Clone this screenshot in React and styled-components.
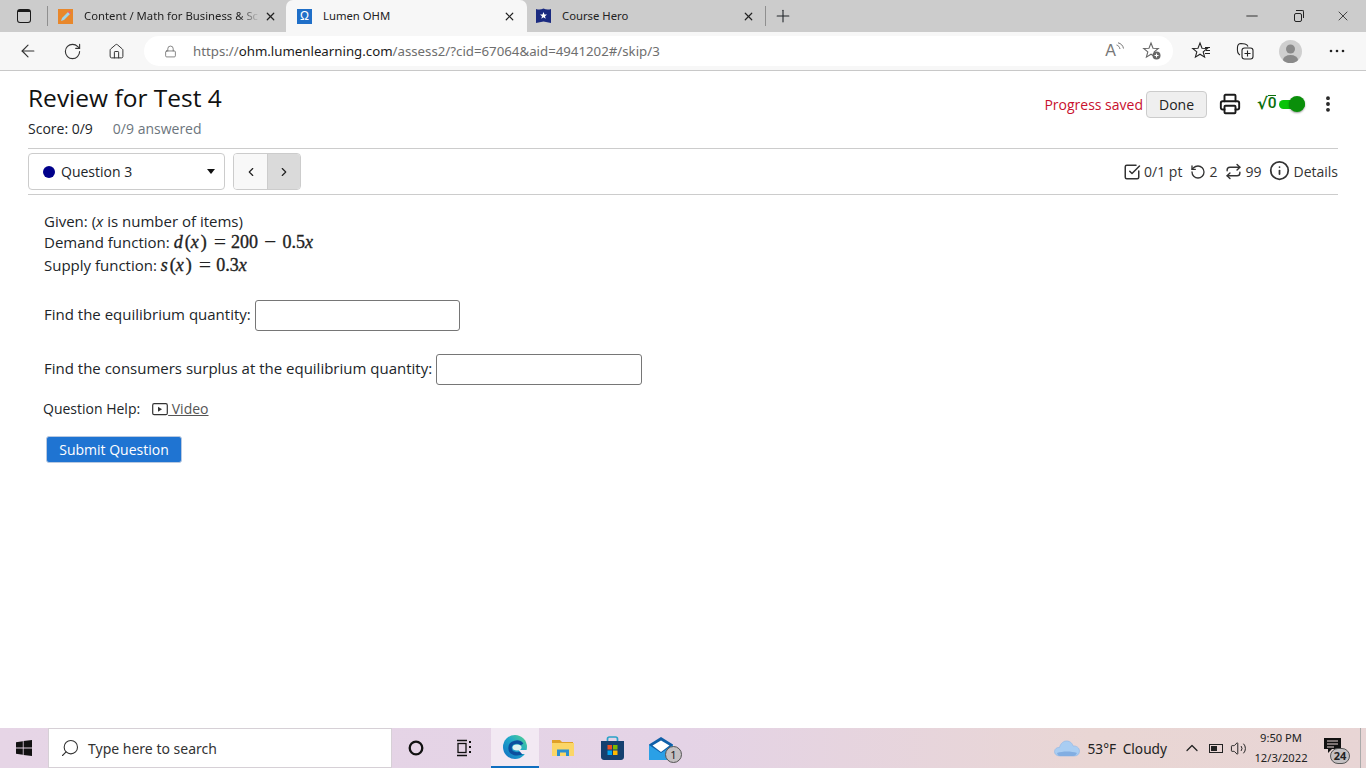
import React from 'react';
import styled, { createGlobalStyle } from 'styled-components';
import { X, Plus, Minus, ArrowLeft, RotateCw, Home, Lock, Printer, SquareCheckBig, RotateCcw, Repeat, Info, ChevronLeft, ChevronRight, MoreVertical, Search, ChevronUp, Volume2 } from 'lucide-react';

const Global = createGlobalStyle`
  html, body { margin: 0; padding: 0; height: 100%; overflow: hidden; background: #fff; }
  #root { height: 100%; }
  * { box-sizing: border-box; }
`;

const Screen = styled.div`
  width: 1366px;
  height: 768px;
  display: flex;
  flex-direction: column;
  font-family: "Open Sans", "Liberation Sans", sans-serif;
  color: #212529;
`;

const TabStrip = styled.div`
  height: 32px;
  background: #cccccc;
  display: flex;
  align-items: center;
  flex: none;
`;
const TabsToggle = styled.div`
  width: 48px;
  height: 32px;
  display: flex;
  align-items: center;
  padding-left: 17px;
  position: relative;
  &::after {
    content: '';
    position: absolute;
    left: 47px;
    top: 6px;
    height: 20px;
    width: 1px;
    background: #8f8f8f;
  }
`;
const TabsIcon = styled.div`
  width: 14px;
  height: 14px;
  border: 1.5px solid #1a1a1a;
  border-radius: 3px;
  border-top-width: 3px;
`;
const Tab = styled.div`
  width: ${p => p.$w}px;
  height: 32px;
  display: flex;
  align-items: center;
  padding-left: ${p => p.$pad}px;
  padding-right: ${p => p.$pr || 10}px;
  font-size: 12px;
  color: #222;
  background: ${p => (p.$active ? '#f7f7f7' : 'transparent')};
  border-radius: ${p => (p.$active ? '7px 7px 0 0' : '0')};
`;
const Favicon = styled.div`
  width: 15px;
  height: 15px;
  flex: none;
  margin-right: 11px;
  display: flex;
  align-items: center;
  justify-content: center;
  background: ${p => p.$bg || 'transparent'};
  color: #fff;
  font-size: 12px;
  font-family: "Liberation Sans", sans-serif;
`;
const TabTitle = styled.div`
  flex: 1;
  min-width: 0;
  padding-bottom: 2px;
  margin-right: 4px;
  white-space: nowrap;
  overflow: hidden;
  font-family: "Noto Sans", sans-serif;
  font-size: 11.3px;
  ${p => p.$fade && 'mask-image: linear-gradient(90deg, #000 88%, transparent 100%);'}
`;
const TabClose = styled(X)`
  flex: none;
  stroke-width: 2.2;
`;
const TabDivider = styled.div`
  width: 1px;
  height: 20px;
  background: #8f8f8f;
`;
const NewTab = styled.div`
  width: 34px;
  display: flex;
  justify-content: center;
`;
const WindowButtons = styled.div`
  margin-left: auto;
  display: flex;
  align-items: center;
  gap: 33px;
  padding-right: 15px;
  color: #111;
`;
const RestoreIcon = styled.div`
  width: 8px;
  height: 9px;
  margin-top: 2px;
  border: 1px solid #222;
  border-radius: 2px;
  position: relative;
  &::after {
    content: '';
    position: absolute;
    top: -4px;
    right: -3px;
    width: 7px;
    height: 7px;
    border-top: 1px solid #222;
    border-right: 1px solid #222;
    border-radius: 0 2px 0 0;
  }
`;

const Toolbar = styled.div`
  height: 39px;
  flex: none;
  background: #f7f7f7;
  border-bottom: 1px solid #c8c8c8;
  display: flex;
  align-items: center;
  padding-left: 18px;
  color: #333;
`;
const NavButton = styled.div`
  width: 20px;
  margin-right: ${p => p.$mr || 0}px;
  display: flex;
  align-items: center;
  justify-content: center;
`;
const Address = styled.div`
  width: 1029px;
  height: 30px;
  background: #fff;
  border-radius: 15px;
  display: flex;
  align-items: center;
  padding-left: 20px;
  font-family: "Noto Sans", sans-serif;
  font-size: 13.25px;
  color: #6e6e6e;
`;
const LockIcon = styled(Lock)`
  margin-right: 16px;
  flex: none;
`;
const UrlHost = styled.span`
  color: #1a1a1a;
`;
const AddressEnd = styled.div`
  margin-left: auto;
  display: flex;
  align-items: center;
  gap: 18px;
  padding-right: 11px;
`;
const ReadAloud = styled.span`
  display: flex;
  align-items: flex-start;
  font-size: 16px;
  line-height: 18px;
  color: #777;
  font-family: "Liberation Sans", sans-serif;
`;
const ToolRight = styled.div`
  display: flex;
  align-items: center;
  margin-left: 18px;
  gap: 24px;
`;
const Avatar = styled.div`
  width: 23px;
  height: 23px;
  border-radius: 50%;
  background: #cfcfcf;
  overflow: hidden;
`;
const MoreDots = styled.svg`
  margin-left: 3px;
`;

const Main = styled.div`
  flex: 1;
  min-height: 0;
  padding: 0 28px;
  background: #fff;
`;
const HeadRow = styled.div`
  display: flex;
  justify-content: space-between;
  height: 78px;
  border-bottom: 1px solid #ccc;
`;
const Title = styled.h1`
  margin: 9px 0 0;
  font-size: 24.5px;
  line-height: 35px;
  font-weight: 400;
  color: #111;
`;
const ScoreRow = styled.div`
  margin-top: 4px;
  font-size: 14px;
  line-height: 20px;
  display: flex;
  gap: 20px;
`;
const Answered = styled.span`
  color: #6c757d;
`;
const HeadTools = styled.div`
  display: flex;
  align-items: center;
  height: 28px;
  margin-top: 19px;
`;
const Saved = styled.span`
  color: #c8102e;
  font-size: 14px;
  margin-right: 3px;
`;
const DoneButton = styled.button`
  width: 61px;
  height: 27px;
  background: #efefef;
  border: 1px solid #ccc;
  border-radius: 4px;
  font: 14px "Open Sans", sans-serif;
  color: #222;
  padding: 0;
  margin-right: 12px;
`;
const MathToggle = styled.div`
  display: flex;
  align-items: center;
  margin-left: 16px;
  margin-right: 13px;
  color: #0a6e0a;
`;
const RootGlyph = styled.div`
  width: 22px;
  display: flex;
  align-items: flex-start;
`;
const RootSign = styled.span`
  font-family: "DejaVu Sans", sans-serif;
  font-weight: 700;
  font-size: 16px;
  line-height: 18px;
`;
const Radicand = styled.span`
  font-family: "Roboto", sans-serif;
  font-weight: 500;
  font-size: 15.5px;
  line-height: 15px;
  border-top: 1.5px solid #0a6e0a;
`;
const Track = styled.div`
  width: 26px;
  height: 9px;
  background: #0ac40a;
  border-radius: 5px;
  position: relative;
`;
const Knob = styled.div`
  position: absolute;
  right: 0;
  top: -4px;
  width: 16px;
  height: 16px;
  border-radius: 50%;
  background: #0a8f0a;
  box-shadow: 0 1px 2px rgba(0, 0, 0, 0.4);
`;

const NavRow = styled.div`
  display: flex;
  align-items: center;
  justify-content: space-between;
  height: 46px;
  border-bottom: 1px solid #ccc;
`;
const NavLeft = styled.div`
  display: flex;
  gap: 8px;
`;
const QuestionSelect = styled.div`
  width: 197px;
  height: 37px;
  border: 1px solid #ccc;
  border-radius: 4px;
  display: flex;
  align-items: center;
  padding: 0 9px 0 14px;
  font-size: 14px;
`;
const Dot = styled.span`
  width: 12px;
  height: 12px;
  border-radius: 50%;
  background: #00008b;
  margin-right: 6px;
`;
const Caret = styled.span`
  margin-left: auto;
  width: 0;
  height: 0;
  border-left: 4px solid transparent;
  border-right: 4px solid transparent;
  border-top: 5px solid #111;
`;
const Pager = styled.div`
  display: flex;
  height: 37px;
  border: 1px solid #ccc;
  border-radius: 4px;
  overflow: hidden;
`;
const PageButton = styled.div`
  width: 33px;
  display: flex;
  align-items: center;
  justify-content: center;
  background: ${p => (p.$on ? '#dadada' : '#f8f8f8')};
  border-left: ${p => (p.$on ? '1px solid #ccc' : 'none')};
  color: #222;
`;
const Meta = styled.div`
  display: flex;
  align-items: center;
  font-size: 14px;
  color: #333;
`;
const MetaItem = styled.span`
  display: flex;
  align-items: center;
  gap: 3px;
  margin-left: ${p => p.$ml || 0}px;
`;
const InfoIcon = styled(Info)`
  margin-top: -3px;
`;

const Question = styled.div`
  padding: 16px 0 0 16px;
  font-size: 15px;
  color: #212529;
`;
const Line = styled.div`
  line-height: ${p => p.$lh}px;
  height: ${p => p.$lh}px;
  white-space: pre;
`;
const MathText = styled.span`
  font-family: "Liberation Serif", serif;
  font-size: 18px;
  color: #222;
  -webkit-text-stroke: 0.35px #222;
  i { font-style: italic; margin-right: 2px; }
`;
const MathOp = styled.span`
  font-size: 22px;
  line-height: 0;
  vertical-align: -1px;
  margin: 0 ${p => p.$mr}px 0 ${p => p.$ml}px;
  -webkit-text-stroke: 0;
`;
const AnswerRow = styled.div`
  display: flex;
  align-items: flex-start;
  gap: 4px;
  height: 30px;
  line-height: 28px;
  margin-top: ${p => p.$mt}px;
`;
const AnswerBox = styled.input`
  width: ${p => p.$w}px;
  height: 31px;
  border: 1px solid #767676;
  border-radius: 3px;
  background: #fff;
  outline: none;
`;
const HelpRow = styled.div`
  display: flex;
  align-items: center;
  margin: 15px 0 0 -1px;
  font-size: 14px;
  line-height: 20px;
`;
const VideoLink = styled.a`
  display: flex;
  align-items: center;
  margin-left: 12px;
  color: #555;
  text-decoration: underline;
`;
const SubmitButton = styled.button`
  display: block;
  width: 136px;
  height: 27px;
  margin: 17px 0 0 2px;
  padding: 0;
  background: #1f74d2;
  border: 1px solid #b9c9e0;
  border-radius: 3px;
  color: #fff;
  font: 14px "Open Sans", sans-serif;
`;

const Taskbar = styled.div`
  height: 40px;
  flex: none;
  background: linear-gradient(90deg, #e6d5e6 0%, #e4d3e6 50%, #e9d6d4 80%, #e8d5d5 100%);
  display: flex;
  align-items: center;
  font-family: "Noto Sans", sans-serif;
  color: #222;
`;
const StartCell = styled.div`
  width: 48px;
  display: flex;
  justify-content: center;
`;
const SearchBox = styled.div`
  width: 344px;
  height: 40px;
  background: #fff;
  border: 1px solid #d6d0d6;
  display: flex;
  align-items: center;
  padding-left: 11px;
  gap: 8px;
  font-size: 14px;
  color: #333;
`;
const SearchIcon = styled(Search)`
  transform: scaleX(-1);
`;
const TaskIcon = styled.div`
  width: 48px;
  height: 40px;
  margin-left: ${p => p.$ml || 0}px;
  display: flex;
  align-items: center;
  justify-content: center;
  position: relative;
  background: ${p => (p.$active ? '#f2e9f3' : 'transparent')};
  border-bottom: ${p => (p.$active ? '2px solid #0f6fc0' : 'none')};
`;
const Badge = styled.span`
  position: absolute;
  right: ${p => p.$r}px;
  bottom: ${p => p.$b}px;
  min-width: ${p => p.$w}px;
  height: ${p => p.$h}px;
  border-radius: 9px;
  background: #c4c0c2;
  border: 1px solid #555;
  color: #222;
  font-size: 11px;
  font-weight: ${p => (p.$bold ? 700 : 400)};
  line-height: ${p => p.$h - 2}px;
  text-align: center;
`;
const Tray = styled.div`
  margin-left: auto;
  display: flex;
  align-items: center;
  height: 40px;
  padding-right: 5px;
`;
const Weather = styled.span`
  font-size: 13.7px;
  margin-left: 7px;
  margin-right: 15px;
  word-spacing: 3px;
`;
const TrayIcons = styled.div`
  display: flex;
  align-items: center;
  gap: 7px;
`;
const BatteryIcon = styled.div`
  width: 14px;
  height: 9px;
  border: 1.5px solid #222;
  padding: 1px;
  &::before {
    content: '';
    display: block;
    width: 6px;
    height: 100%;
    background: #222;
  }
`;
const Clock = styled.div`
  width: 70px;
  margin-left: -1px;
  text-align: center;
  font-size: 11.2px;
  line-height: 20px;
`;
const Notice = styled.div`
  width: 32px;
  position: relative;
  height: 40px;
  display: flex;
  align-items: center;
  justify-content: center;
`;
const NoticeIcon = styled.svg`
  margin-top: -6px;
`;
const ShowDesktop = styled.div`
  width: 1px;
  height: 40px;
  background: #aaa;
  margin-left: 12px;
`;

const WindowsLogo = () => (
  <svg width="16" height="16" viewBox="0 0 16 16" fill="#111">
    <path d="M0 2.2 6.8 1.2V7.5H0zM7.600 1.100 16 0V7.500H7.600zM0 8.400H6.800V14.800L0 13.800zM7.600 8.400H16V16L7.600 14.900z" />
  </svg>
);

const EdgeLogo = () => (
  <svg width="26" height="26" viewBox="0 0 26 26">
    <defs>
      <linearGradient id="edgeBody" x1="1" y1="0" x2="0" y2="1">
        <stop offset="0" stopColor="#58d68a" />
        <stop offset="0.45" stopColor="#1fa8c9" />
        <stop offset="1" stopColor="#0f6cc4" />
      </linearGradient>
    </defs>
    <circle cx="13" cy="13" r="12" fill="url(#edgeBody)" />
    <path d="M20 10.500C17 6.500 8 7.500 8 14c0 5.500 7 8 14.500 3.500" fill="none" stroke="#0b4f9e" strokeWidth="3.400" />
    <ellipse cx="15" cy="13.500" rx="4.500" ry="3" fill="#dff2f0" />
    <path d="M16.500 16h9.500v4h-6z" fill="#f2e9f3" />
  </svg>
);

const FolderLogo = () => (
  <svg width="22" height="18" viewBox="0 0 22 18">
    <path d="M0 1h8l2 2h11v3H0z" fill="#e0a128" />
    <path d="M0 4h22v13H0z" fill="#fbd667" />
    <path d="M5 17v-6.500h12V17h-3v-3.500H8V17z" fill="#2a8fd0" />
  </svg>
);

const StoreLogo = () => (
  <svg width="23" height="24" viewBox="0 0 23 24">
    <path d="M6.500 7V3c0-1.300 1-2 2-2h6c1 0 2 .7 2 2v4" fill="none" stroke="#2aa3c8" strokeWidth="1.700" />
    <path d="M0 5h23v16c0 1.600-1.200 3-3 3H3c-1.800 0-3-1.400-3-3z" fill="#15406f" />
    <rect x="6.500" y="9" width="4.500" height="4.500" fill="#f25022" />
    <rect x="12" y="9" width="4.500" height="4.500" fill="#7fba00" />
    <rect x="6.500" y="14.500" width="4.500" height="4.500" fill="#00a4ef" />
    <rect x="12" y="14.500" width="4.500" height="4.500" fill="#ffb900" />
  </svg>
);

const MailLogo = () => (
  <svg width="24" height="23" viewBox="0 0 24 23">
    <path d="M12 0 24 7.500V23H0V7.500z" fill="#0f5fa8" />
    <path d="M3.500 8.500 12 3.500l8.500 5L12 15z" fill="#fff" />
    <path d="M0 8 12 16 24 8V23H0z" fill="#2aa0e6" />
  </svg>
);

const CloudLogo = () => (
  <svg width="26" height="18" viewBox="0 0 26 18">
    <path d="M6 17C2.500 17 .5 15 .5 12.500S3 8 5.500 8.500C6.500 4 10 1.500 13.500 2c3 .4 5 2.500 5.500 5 3.500-.5 6.500 2 6.500 5s-2 5-5.500 5z" fill="#a9cdf2" stroke="#8db6e6" strokeWidth="0.6" />
    <path d="M3 14c6-2 14-2 20 0-1 2-2 3-4 3H6c-1.500 0-2.500-1-3-3z" fill="#82aee2" />
  </svg>
);

const FavStarIcon = ({ plus }) => (
  <svg width="20" height="20" viewBox="0 0 20 20" fill="none" stroke={plus ? '#666' : '#222'} strokeWidth="1.100">
    <path d="M9 2l2 5.200 5.300.3-4.100 3.400 1.400 5.200L9 13.200l-4.600 2.900 1.400-5.200L1.700 7.500 7 7.200z" />
    {plus ? (
      <>
        <circle cx="14.500" cy="14.500" r="4" fill="#666" stroke="none" />
        <path d="M14.500 12.500v4M12.500 14.500h4" stroke="#fff" />
      </>
    ) : (
      <path d="M14 6.500h5M15 9.500h4M14 12.500h5" />
    )}
  </svg>
);

const CollectionsIcon = () => (
  <svg width="20" height="20" viewBox="0 0 20 20" fill="none" stroke="#222" strokeWidth="1.100">
    <path d="M5 14C3 13 2 10.500 2.500 6 2.800 3 4 2.500 6 2.500l4 .5c1.500.2 2.500 1 3 2.500" />
    <rect x="7" y="7" width="11" height="11" rx="2.500" />
    <path d="M12.500 9.500v6M9.500 12.500h6" />
  </svg>
);

const PencilFavicon = () => (
  <Favicon $bg="#e8872b">
    <svg width="13" height="13" viewBox="0 0 13 13">
      <path d="M2 11l1-3 6-6 2 2-6 6z" fill="#9fd4e8" />
      <path d="M9 2l2 2 1-1-2-2z" fill="#e85a8a" />
    </svg>
  </Favicon>
);

const ShieldFavicon = () => (
  <Favicon>
    <svg width="15" height="16" viewBox="0 0 15 16">
      <path d="M0 1c2.500.8 5 .8 7.500-.5C10 1.800 12.500 1.800 15 1v14l-7.500-1.500L0 15z" fill="#1a2a80" />
      <path d="M7.500 4l1 2.400 2.500.2-2 1.600.7 2.500-2.200-1.400-2.200 1.400.7-2.500-2-1.600 2.500-.2z" fill="#fff" />
    </svg>
  </Favicon>
);

const VideoIcon = () => (
  <svg width="16" height="13" viewBox="0 0 16 13" fill="none" stroke="#333" strokeWidth="1.200">
    <rect x="0.700" y="0.700" width="14.600" height="11" rx="1.500" />
    <path d="M6 3.700v5l4-2.500z" fill="#333" stroke="none" />
  </svg>
);

export default function App() {
  return (
    <Screen>
      <Global />
      <TabStrip>
        <TabsToggle><TabsIcon /></TabsToggle>
        <Tab $w={238} $pad={10} $pr={9}>
          <PencilFavicon />
          <TabTitle $fade>Content / Math for Business &amp; Sc</TabTitle>
          <TabClose size={13} />
        </Tab>
        <Tab $w={241} $pad={11} $pr={11} $active>
          <Favicon $bg="#1f6fc8">Ω</Favicon>
          <TabTitle>Lumen OHM</TabTitle>
          <TabClose size={13} />
        </Tab>
        <Tab $w={238} $pad={9}>
          <ShieldFavicon />
          <TabTitle>Course Hero</TabTitle>
          <TabClose size={13} />
        </Tab>
        <TabDivider />
        <NewTab><Plus size={20} strokeWidth={1.3} /></NewTab>
        <WindowButtons>
          <Minus size={18} strokeWidth={1.1} />
          <RestoreIcon />
          <X size={16} strokeWidth={1.1} />
        </WindowButtons>
      </TabStrip>

      <Toolbar>
        <NavButton $mr={24}><ArrowLeft size={22} strokeWidth={1.4} /></NavButton>
        <NavButton $mr={24}><RotateCw size={19} strokeWidth={1.4} /></NavButton>
        <NavButton $mr={18}><Home size={17} strokeWidth={1.4} /></NavButton>
        <Address>
          <LockIcon size={13} strokeWidth={1.3} color="#555" />
          <span>https://<UrlHost>ohm.lumenlearning.com</UrlHost>/assess2/?cid=67064&amp;aid=4941202#/skip/3</span>
          <AddressEnd>
            <ReadAloud>
              A
              <svg width="8" height="10" viewBox="0 0 8 10" fill="none" stroke="#777" strokeWidth="1">
                <path d="M0.500 3C2.500 3.500 3.500 5 4 7M2 0.800C5 1.500 7 3.500 7.500 6.500" />
              </svg>
            </ReadAloud>
            <FavStarIcon plus />
          </AddressEnd>
        </Address>
        <ToolRight>
          <FavStarIcon />
          <CollectionsIcon />
          <Avatar>
            <svg width="23" height="23" viewBox="0 0 23 23" fill="#8a8a8a">
              <circle cx="11.500" cy="9" r="4.500" />
              <ellipse cx="11.500" cy="20" rx="7.500" ry="5" />
            </svg>
          </Avatar>
          <MoreDots width="16" height="4" viewBox="0 0 16 4" fill="#222">
            <circle cx="2" cy="2" r="1.300" /><circle cx="8" cy="2" r="1.300" /><circle cx="14" cy="2" r="1.300" />
          </MoreDots>
        </ToolRight>
      </Toolbar>

      <Main>
        <HeadRow>
          <div>
            <Title>Review for Test 4</Title>
            <ScoreRow>
              <span>Score: 0/9</span>
              <Answered>0/9 answered</Answered>
            </ScoreRow>
          </div>
          <HeadTools>
            <Saved>Progress saved</Saved>
            <DoneButton>Done</DoneButton>
            <Printer size={22} strokeWidth={2.1} color="#1a1a1a" />
            <MathToggle>
              <RootGlyph><RootSign>√</RootSign><Radicand>0</Radicand></RootGlyph>
              <Track><Knob /></Track>
            </MathToggle>
            <MoreVertical size={20} strokeWidth={2.6} color="#222" />
          </HeadTools>
        </HeadRow>

        <NavRow>
          <NavLeft>
            <QuestionSelect>
              <Dot />
              Question 3
              <Caret />
            </QuestionSelect>
            <Pager>
              <PageButton><ChevronLeft size={14} strokeWidth={2} /></PageButton>
              <PageButton $on><ChevronRight size={14} strokeWidth={2} /></PageButton>
            </Pager>
          </NavLeft>
          <Meta>
            <MetaItem><SquareCheckBig size={18} strokeWidth={2} />0/1 pt</MetaItem>
            <MetaItem $ml={8}><RotateCcw size={16} strokeWidth={2} />2</MetaItem>
            <MetaItem $ml={8}><Repeat size={17} strokeWidth={2} />99</MetaItem>
            <MetaItem $ml={8}><InfoIcon size={21} strokeWidth={2} />Details</MetaItem>
          </Meta>
        </NavRow>

        <Question>
          <Line $lh={21}>Given: (<i>x</i> is number of items)</Line>
          <Line $lh={20}>Demand function: <MathText><i>d</i>(<i>x</i>)<MathOp $ml={7} $mr={5}>=</MathOp>200<MathOp $ml={6} $mr={6}>−</MathOp>0.5<i>x</i></MathText></Line>
          <Line $lh={26}>Supply function: <MathText><i>s</i>(<i>x</i>)<MathOp $ml={7} $mr={5}>=</MathOp>0.3<i>x</i></MathText></Line>
          <AnswerRow $mt={22}>
            Find the equilibrium quantity:
            <AnswerBox $w={205} />
          </AnswerRow>
          <AnswerRow $mt={24}>
            Find the consumers surplus at the equilibrium quantity:
            <AnswerBox $w={206} />
          </AnswerRow>
          <HelpRow>
            Question Help:
            <VideoLink><VideoIcon />&nbsp;Video</VideoLink>
          </HelpRow>
          <SubmitButton>Submit Question</SubmitButton>
        </Question>
      </Main>

      <Taskbar>
        <StartCell><WindowsLogo /></StartCell>
        <SearchBox>
          <SearchIcon size={20} strokeWidth={1.3} />
          Type here to search
        </SearchBox>
        <TaskIcon>
          <svg width="16" height="16" viewBox="0 0 16 16" fill="none" stroke="#111" strokeWidth="2.300"><circle cx="8" cy="8" r="6.300" /></svg>
        </TaskIcon>
        <TaskIcon>
          <svg width="18" height="18" viewBox="0 0 18 18" fill="none" stroke="#111" strokeWidth="1.300">
            <path d="M2 1.500h10M2 16.500h10" />
            <rect x="3" y="4.500" width="8" height="9" />
            <path d="M15 2v2M15 7v2M15 12v2" strokeWidth="2" />
          </svg>
        </TaskIcon>
        <TaskIcon $active $ml={3}><EdgeLogo /></TaskIcon>
        <TaskIcon><FolderLogo /></TaskIcon>
        <TaskIcon $ml={1}><StoreLogo /></TaskIcon>
        <TaskIcon $ml={1}>
          <MailLogo />
          <Badge $r={3} $b={5} $w={17} $h={17}>1</Badge>
        </TaskIcon>
        <Tray>
          <CloudLogo />
          <Weather>53°F Cloudy</Weather>
          <TrayIcons>
            <ChevronUp size={20} strokeWidth={1.5} />
            <BatteryIcon />
            <Volume2 size={17} strokeWidth={1.4} />
          </TrayIcons>
          <Clock>9:50 PM<br />12/3/2022</Clock>
          <Notice>
            <NoticeIcon width="17" height="15" viewBox="0 0 17 15">
              <path d="M0 0h17v11H8l-4 4v-4H0z" fill="#111" />
              <path d="M3 3h11M3 6h11M3 9h7" stroke="#e8d5d5" strokeWidth="1" />
            </NoticeIcon>
            <Badge $r={-2} $b={4} $w={20} $h={16} $bold>24</Badge>
          </Notice>
          <ShowDesktop />
        </Tray>
      </Taskbar>
    </Screen>
  );
}
